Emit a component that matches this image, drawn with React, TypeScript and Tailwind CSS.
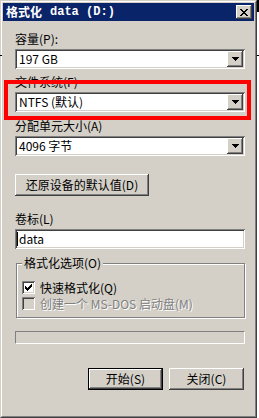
import React from 'react';

// classic 3D borders, drawn as inset shadows so they take no layout space
const raised = 'shadow-[inset_-1px_-1px_#404040,inset_1px_1px_#ffffff,inset_-2px_-2px_#808080,inset_2px_2px_#d4d0c8]';
const sunken = 'shadow-[inset_1px_1px_#808080,inset_-1px_-1px_#ffffff,inset_2px_2px_#404040,inset_-2px_-2px_#d4d0c8]';

const arrowRows = ['XXXXXXX', '.XXXXX.', '..XXX..', '...X...'];
const closeRows = ['XX....XX', '.XX..XX.', '..XXXX..', '...XX...', '..XXXX..', '.XX..XX.', 'XX....XX'];
const checkRows = ['......X', '.....XX', 'X...XXX', 'XX.XXX.', 'XXXXX..', '.XXX...', '..X....'];

const Pixels: React.FC<{ rows: string[]; className?: string }> = ({ rows, className }) => (
    <svg width={rows[0].length} height={rows.length} className={className} shapeRendering="crispEdges">
        {rows.flatMap((row, y) =>
            row.split('').map((c, x) =>
                c === 'X' ? <rect key={`${x}-${y}`} x={x} y={y} width={1} height={1} fill="currentColor" /> : null
            )
        )}
    </svg>
);

const Label: React.FC<{ children: React.ReactNode; className?: string }> = ({ children, className = '' }) => (
    <div className={`h-[14px] leading-[14px] ${className}`}>{children}</div>
);

const Combo: React.FC<{ value: string; className?: string }> = ({ value, className = '' }) => (
    <div className={`flex h-[20px] w-[230px] bg-white p-[2px] ${sunken} ${className}`}>
        <div className="flex-1 pl-[2px] leading-[16px]">{value}</div>
        <div className={`flex h-[16px] w-[16px] items-center justify-center bg-[#d4d0c8] ${raised}`}>
            <Pixels rows={arrowRows} className="text-black" />
        </div>
    </div>
);

const Checkbox: React.FC<{ checked?: boolean; disabled?: boolean }> = ({ checked, disabled }) => (
    <div
        className={`flex h-[13px] w-[13px] shrink-0 items-center justify-center ${disabled ? 'bg-[#d4d0c8]' : 'bg-white'} ${sunken}`}
    >
        {checked && <Pixels rows={checkRows} className="text-black" />}
    </div>
);

export default function App() {
    return (
        <div className="relative h-[418px] w-[259px] overflow-hidden bg-white font-['Noto_Sans_CJK_SC',sans-serif] text-[12px] text-black">
            {/* window frame */}
            <div className="h-[418px] w-[257px] border border-[#d4d0c8] border-r-[#404040] border-b-[#404040]">
                <div className="flex h-full flex-col border border-white border-r-[#808080] border-b-[#808080] bg-[#d4d0c8] p-[1px]">
                    {/* title bar */}
                    <div className="flex h-[18px] items-center bg-[#0a246a] pl-[3px] pr-[2px] text-white">
                        <span className="font-bold leading-[18px]">格式化</span>
                        <span className="ml-[8px] font-['Liberation_Mono',monospace] font-bold leading-[18px]">data (D:)</span>
                        <div className={`ml-auto flex h-[14px] w-[16px] items-center justify-center bg-[#d4d0c8] ${raised}`}>
                            <Pixels rows={closeRows} className="text-black" />
                        </div>
                    </div>

                    {/* body */}
                    <div className="flex flex-col pl-[12px]">
                        <Label className="mt-[11px]">容量(P):</Label>
                        <Combo value="197 GB" className="mt-[3px]" />

                        <Label className="mt-[6px]">文件系统(F)</Label>
                        <Combo value="NTFS (默认)" className="mt-[3px]" />

                        <Label className="mt-[7px]">分配单元大小(A)</Label>
                        <Combo value="4096 字节" className="mt-[3px]" />

                        <div className={`mt-[18px] flex h-[22px] w-[134px] items-center justify-center bg-[#d4d0c8] leading-[14px] ${raised}`}>
                            还原设备的默认值(D)
                        </div>

                        <Label className="mt-[16px]">卷标(L)</Label>
                        <div className={`mt-[3px] flex h-[20px] w-[230px] items-center bg-white pl-[2px] ${sunken}`}>
                            <span className="h-[14px] w-[1px] bg-black" />
                            <span className="ml-[1px] leading-[14px]">data</span>
                        </div>

                        {/* group box */}
                        <div className="relative ml-[1px] mt-[14px] h-[55px] w-[229px] border border-[#808080] shadow-[1px_1px_0_#ffffff,inset_1px_1px_0_#ffffff]">
                            <span className="absolute -top-[8px] left-[5px] bg-[#d4d0c8] px-[2px] leading-[14px]">格式化选项(O)</span>
                            <div className="flex flex-col gap-[3px] pl-[5px] pt-[17px]">
                                <div className="flex h-[13px] items-center gap-[5px]">
                                    <Checkbox checked />
                                    <span className="leading-[13px]">快速格式化(Q)</span>
                                </div>
                                <div className="flex h-[13px] items-center gap-[5px]">
                                    <Checkbox disabled />
                                    <span className="leading-[13px] text-[#808080] [text-shadow:1px_1px_0_#ffffff]">创建一个 MS-DOS 启动盘(M)</span>
                                </div>
                            </div>
                        </div>

                        {/* progress bar */}
                        <div className="mt-[13px] h-[13px] w-[230px] border border-[#808080] border-r-white border-b-white" />

                        {/* buttons */}
                        <div className="mt-[24px] flex gap-[6px] pl-[73px]">
                            <div className="h-[22px] w-[75px] border border-black">
                                <div className={`flex h-full w-full items-center justify-center bg-[#d4d0c8] leading-[14px] ${raised}`}>开始(S)</div>
                            </div>
                            <div className={`flex h-[22px] w-[75px] items-center justify-center bg-[#d4d0c8] leading-[14px] ${raised}`}>
                                关闭(C)
                            </div>
                        </div>
                    </div>
                </div>
            </div>

            {/* stray desktop pixels around the window */}
            <div className="absolute right-0 top-0 h-[12px] w-[2px] bg-black" />
            <div className="absolute left-0 top-[55px] h-[1px] w-[2px] bg-black" />
            <div className="absolute right-0 top-[55px] h-[1px] w-[2px] bg-black" />

            {/* red highlight annotation */}
            <div className="absolute left-[4px] top-[80px] h-[40px] w-[247px] border-4 border-[#ff0000]" />
        </div>
    );
}
